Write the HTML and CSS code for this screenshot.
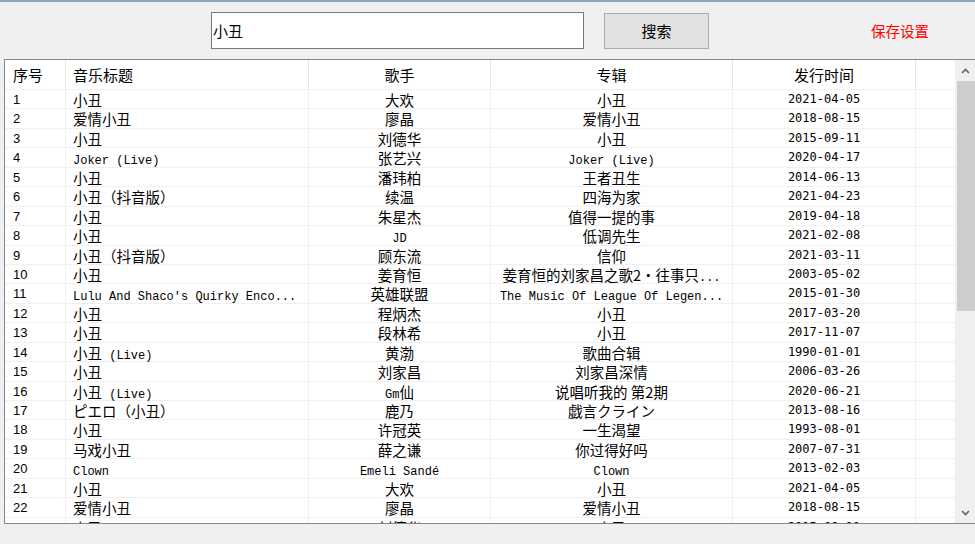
FILE: index.html
```html
<!DOCTYPE html>
<html>
  <head>
    <title>音乐搜索</title>
    <meta charset="UTF-8">
    <link rel="stylesheet" href="styles.css">
  </head>
  <body>
    <div class="toolbar">
      <input class="search" type="text" value="小丑">
      <button class="btn">搜索</button>
      <a class="save">保存设置</a>
    </div>
    <div class="list">
      <div class="view">
        <div class="row head"><div class="no">序号</div><div class="title">音乐标题</div><div>歌手</div><div>专辑</div><div>发行时间</div><div></div></div>
        <div class="row"><div class="no">1</div><div class="title">小丑</div><div>大欢</div><div>小丑</div><div class="date">2021-04-05</div><div></div></div>
        <div class="row"><div class="no">2</div><div class="title">爱情小丑</div><div>廖晶</div><div>爱情小丑</div><div class="date">2018-08-15</div><div></div></div>
        <div class="row"><div class="no">3</div><div class="title">小丑</div><div>刘德华</div><div>小丑</div><div class="date">2015-09-11</div><div></div></div>
        <div class="row"><div class="no">4</div><div class="title"><span class="en">Joker (Live)</span></div><div>张艺兴</div><div><span class="en">Joker (Live)</span></div><div class="date">2020-04-17</div><div></div></div>
        <div class="row"><div class="no">5</div><div class="title">小丑</div><div>潘玮柏</div><div>王者丑生</div><div class="date">2014-06-13</div><div></div></div>
        <div class="row"><div class="no">6</div><div class="title">小丑（抖音版）</div><div>续温</div><div>四海为家</div><div class="date">2021-04-23</div><div></div></div>
        <div class="row"><div class="no">7</div><div class="title">小丑</div><div>朱星杰</div><div>值得一提的事</div><div class="date">2019-04-18</div><div></div></div>
        <div class="row"><div class="no">8</div><div class="title">小丑</div><div><span class="en">JD</span></div><div>低调先生</div><div class="date">2021-02-08</div><div></div></div>
        <div class="row"><div class="no">9</div><div class="title">小丑（抖音版）</div><div>顾东流</div><div>信仰</div><div class="date">2021-03-11</div><div></div></div>
        <div class="row"><div class="no">10</div><div class="title">小丑</div><div>姜育恒</div><div>姜育恒的刘家昌之歌2・往事只<span class="en">...</span></div><div class="date">2003-05-02</div><div></div></div>
        <div class="row"><div class="no">11</div><div class="title"><span class="en">Lulu And Shaco's Quirky Enco...</span></div><div>英雄联盟</div><div><span class="en">The Music Of League Of Legen...</span></div><div class="date">2015-01-30</div><div></div></div>
        <div class="row"><div class="no">12</div><div class="title">小丑</div><div>程炳杰</div><div>小丑</div><div class="date">2017-03-20</div><div></div></div>
        <div class="row"><div class="no">13</div><div class="title">小丑</div><div>段林希</div><div>小丑</div><div class="date">2017-11-07</div><div></div></div>
        <div class="row"><div class="no">14</div><div class="title">小丑<span class="en"> (Live)</span></div><div>黄渤</div><div>歌曲合辑</div><div class="date">1990-01-01</div><div></div></div>
        <div class="row"><div class="no">15</div><div class="title">小丑</div><div>刘家昌</div><div>刘家昌深情</div><div class="date">2006-03-26</div><div></div></div>
        <div class="row"><div class="no">16</div><div class="title">小丑<span class="en"> (Live)</span></div><div><span class="en">Gm</span>仙</div><div>说唱听我的 第2期</div><div class="date">2020-06-21</div><div></div></div>
        <div class="row"><div class="no">17</div><div class="title">ピエロ（小丑）</div><div>鹿乃</div><div>戯言クライン</div><div class="date">2013-08-16</div><div></div></div>
        <div class="row"><div class="no">18</div><div class="title">小丑</div><div>许冠英</div><div>一生渴望</div><div class="date">1993-08-01</div><div></div></div>
        <div class="row"><div class="no">19</div><div class="title">马戏小丑</div><div>薛之谦</div><div>你过得好吗</div><div class="date">2007-07-31</div><div></div></div>
        <div class="row"><div class="no">20</div><div class="title"><span class="en">Clown</span></div><div><span class="en">Emeli Sandé</span></div><div><span class="en">Clown</span></div><div class="date">2013-02-03</div><div></div></div>
        <div class="row"><div class="no">21</div><div class="title">小丑</div><div>大欢</div><div>小丑</div><div class="date">2021-04-05</div><div></div></div>
        <div class="row"><div class="no">22</div><div class="title">爱情小丑</div><div>廖晶</div><div>爱情小丑</div><div class="date">2018-08-15</div><div></div></div>
        <div class="row"><div class="no">23</div><div class="title">小丑</div><div>刘德华</div><div>小丑</div><div class="date">2015-09-11</div><div></div></div>
      </div>
      <div class="scrollbar">
        <div class="arrow">
          <svg width="9" height="6" viewBox="0 0 9 6"><polyline points="1,5 4.5,1.5 8,5" fill="none" stroke="#606060" stroke-width="1.6"/></svg>
        </div>
        <div class="thumb"></div>
        <div class="track"></div>
        <div class="arrow">
          <svg width="9" height="6" viewBox="0 0 9 6"><polyline points="1,1 4.5,4.5 8,1" fill="none" stroke="#606060" stroke-width="1.6"/></svg>
        </div>
      </div>
    </div>
  </body>
</html>
```

FILE: styles.css
```css
html {
  background: #f0f0f0;
}
body {
  margin: 0;
  border-top: 2px solid #8aa6c3;
  font-family: "Noto Sans CJK SC", sans-serif;
  color: #000;
}
.toolbar {
  display: flex;
  align-items: center;
  height: 57px;
  padding-left: 211px;
}
.search {
  box-sizing: border-box;
  width: 373px;
  height: 37px;
  margin: 0;
  padding: 0 1px;
  border: 1px solid #7a7a7a;
  background: white;
  font-family: "Noto Sans CJK SC", sans-serif;
  font-size: 15px;
  color: #000;
  outline: none;
}
.btn {
  box-sizing: border-box;
  width: 105px;
  height: 36px;
  margin-left: 20px;
  border: 1px solid #adadad;
  background: #e1e1e1;
  font-family: "Noto Sans CJK SC", sans-serif;
  font-size: 15px;
  color: #000;
  padding: 0;
}
.save {
  margin-left: auto;
  margin-right: 46px;
  color: #ff0000;
  font-size: 14.5px;
  cursor: pointer;
}
.list {
  display: flex;
  height: 465px;
  box-sizing: border-box;
  margin-left: 4px;
  border: 1px solid #828790;
  border-right: none;
  background: white;
}
.view {
  flex: 1;
  overflow: hidden;
}
.row {
  display: grid;
  grid-template-columns: 61px 243px 182px 242px 183px 1fr;
  height: 19.45px;
  box-sizing: border-box;
  border-bottom: 1px solid #f0f0f0;
  font-size: 14.5px;
  line-height: 19px;
}
.row > div {
  text-align: center;
  border-right: 1px solid #f0f0f0;
  white-space: nowrap;
}
.row > div:last-child {
  border-right: none;
}
.row.head {
  height: 30px;
  font-size: 15px;
  line-height: 29px;
}
.row.head > div {
  border-right-color: #e5e5e5;
}
.row .no {
  text-align: left;
  padding-left: 8px;
}
.row .title {
  text-align: left;
  padding-left: 7px;
}
.row > .no {
  font-family: "Liberation Sans", sans-serif;
  font-size: 13px;
}
.row.head > .no {
  font-family: "Noto Sans CJK SC", sans-serif;
  font-size: 15px;
}
.date {
  font-family: "DejaVu Sans Mono", monospace;
  font-size: 12px;
}
.en {
  font-family: "Liberation Mono", monospace;
  font-size: 12px;
  white-space: pre;
}
.scrollbar {
  width: 20px;
  display: flex;
  flex-direction: column;
  background: #f0f0f0;
}
.arrow {
  height: 21px;
  display: flex;
  align-items: center;
  justify-content: center;
}
.thumb {
  height: 230px;
  margin-left: 2px;
  background: #cdcdcd;
}
.track {
  flex: 1;
}
```
